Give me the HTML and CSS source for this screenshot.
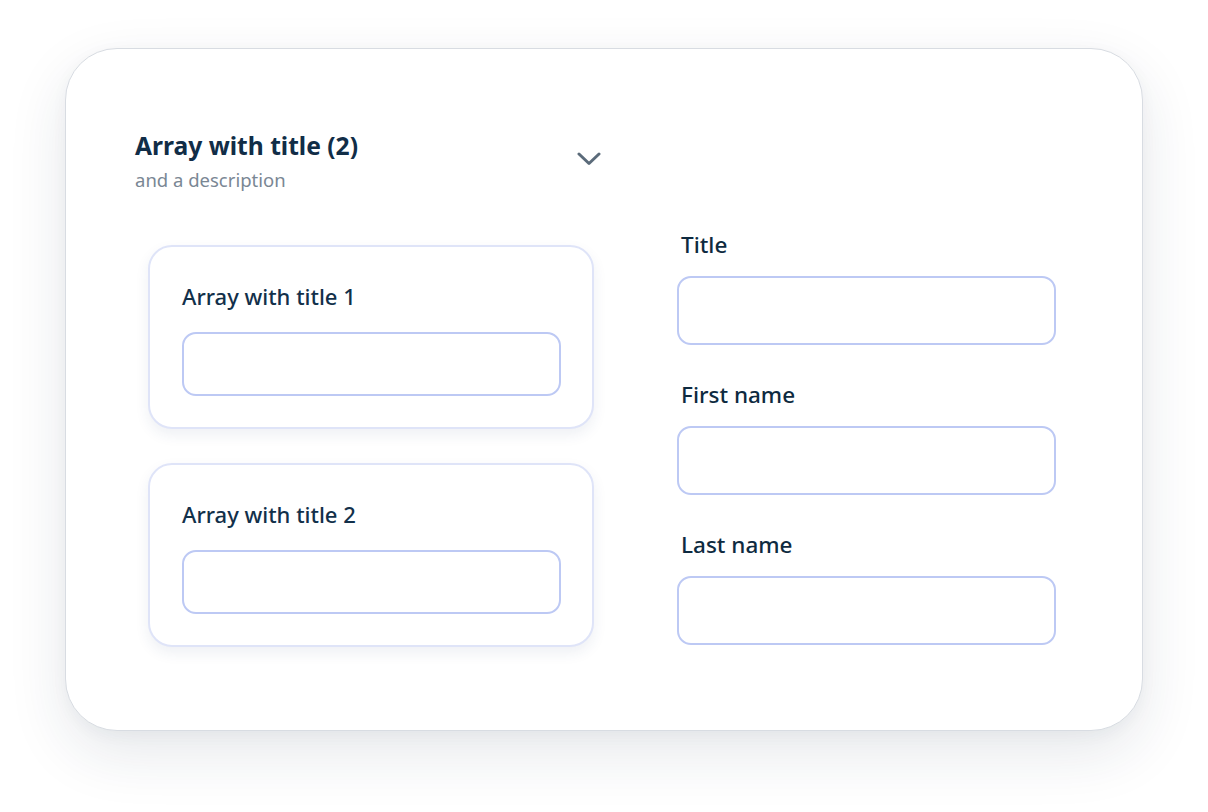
FILE: index.html
```html
<!DOCTYPE html>
<html lang="en">
<head>
<meta charset="utf-8">
<title>Array with title</title>
<link rel="stylesheet" href="styles.css">
</head>
<body>
<div class="stage">
  <section class="panel">
    <header class="panel-head">
      <div class="head-text">
        <h2 class="panel-title">Array with title (2)</h2>
        <p class="panel-desc">and a description</p>
      </div>
      <svg class="chevron" width="24" height="14" viewBox="0 0 24 14" aria-hidden="true">
        <path d="M2 2 L12 11.5 L22 2" fill="none" stroke="#5b6b7a" stroke-width="3" stroke-linecap="round" stroke-linejoin="round"/>
      </svg>
    </header>
    <div class="panel-body">
      <div class="items">
        <div class="item-card">
          <label class="item-label">Array with title 1</label>
          <div class="input small"></div>
        </div>
        <div class="item-card">
          <label class="item-label">Array with title 2</label>
          <div class="input small"></div>
        </div>
      </div>
      <div class="fields">
        <div class="field">
          <label class="field-label">Title</label>
          <div class="input"></div>
        </div>
        <div class="field">
          <label class="field-label">First name</label>
          <div class="input"></div>
        </div>
        <div class="field">
          <label class="field-label">Last name</label>
          <div class="input"></div>
        </div>
      </div>
    </div>
  </section>
</div>
</body>
</html>
```
FILE: styles.css
```css
* { box-sizing: border-box; }
html, body { margin: 0; padding: 0; background: #ffffff; }
body {
  font-family: "Noto Sans", "Open Sans", sans-serif;
  color: #0f2a42;
}
.stage {
  padding: 48px 0 0 65px;
  min-height: 812px;
}
.panel {
  width: 1078px;
  height: 683px;
  background: #ffffff;
  border: 1.5px solid #d8dce2;
  border-radius: 52px;
  box-shadow: 0 22px 60px rgba(30, 45, 70, 0.11), 0 4px 16px rgba(30, 45, 70, 0.04);
  padding: 81px 0 0 69px;
}
.panel-head {
  width: 466px;
  display: flex;
  justify-content: space-between;
  align-items: flex-start;
}
.panel-title {
  margin: 0;
  font-size: 24.6px;
  line-height: 32px;
  font-weight: 700;
  color: #112d47;
}
.panel-desc {
  margin: 6px 0 0;
  font-size: 18.5px;
  line-height: 24px;
  color: #7a8794;
}
.chevron {
  margin-top: 22px;
}
.panel-body {
  display: flex;
  gap: 83px;
  margin-top: 37px;
  padding-left: 13px;
}
.items {
  display: flex;
  flex-direction: column;
  gap: 34px;
  padding-top: 16px;
}
.item-card {
  width: 446px;
  height: 184px;
  border: 2px solid #dfe4f8;
  border-radius: 24px;
  background: #fff;
  box-shadow: 0 6px 14px rgba(40, 60, 110, 0.08);
  padding: 35px 32px 0;
  display: flex;
  flex-direction: column;
}
.item-label {
  font-size: 22px;
  line-height: 28px;
  font-weight: 500;
  color: #12304a;
  margin-bottom: 22px;
}
.input {
  width: 379px;
  height: 69px;
  border: 2px solid #bdc9f4;
  border-radius: 14px;
  background: #fff;
}
.input.small {
  height: 64px;
}
.fields {
  display: flex;
  flex-direction: column;
  gap: 36px;
  padding-top: 2px;
}
.field {
  display: flex;
  flex-direction: column;
  gap: 17px;
}
.field-label {
  font-size: 22.5px;
  line-height: 28px;
  font-weight: 500;
  color: #0e2a40;
  padding-left: 4px;
}
```
